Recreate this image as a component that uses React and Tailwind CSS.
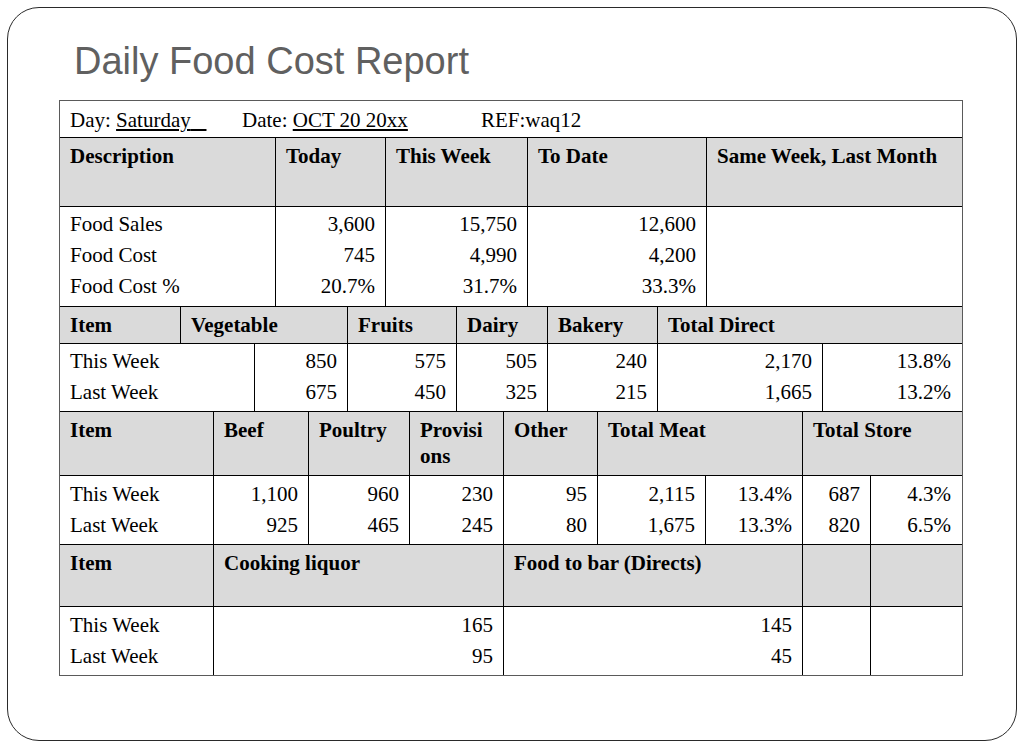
import React from 'react';

const H = 'bg-[#dadada] font-bold leading-[26px] pt-[5px] px-[10px] border-r border-black';
const HL = 'bg-[#dadada] font-bold leading-[26px] pt-[5px] px-[10px]';
const D = 'leading-[31px] pt-[3px] px-[10px] border-r border-black';
const DL = 'leading-[31px] pt-[3px] px-[10px]';

function Lines({ items, right }) {
  return (
    <>
      {items.map((t, i) => (
        <div key={i} className={right ? 'text-right' : ''}>
          {t || '\u00a0'}
        </div>
      ))}
    </>
  );
}

const weeks = ['This Week', 'Last Week'];

export default function App() {
  return (
    <div className="w-[1024px] h-[751px] bg-white p-[7px]">
      <div className="h-[734px] w-[1010px] rounded-[32px] border border-[#2a2a2a] pt-[31px]">
        <h1 className="pl-[66px] text-[38px] leading-[44px] text-[#606060] font-['Liberation_Sans',Arial,sans-serif]">
          Daily Food Cost Report
        </h1>

        <div className="ml-[51px] mt-[17px] w-[904px] border border-[#5a5a5a] text-[21px] text-black font-['Liberation_Serif','Times_New_Roman',serif]">
          {/* day / date / ref */}
          <div className="flex h-[37px] border-b border-black pl-[10px] pt-[6px] leading-[26px]">
            <div className="w-[172px]">
              Day: <span className="underline">Saturday{'\u00a0\u00a0\u00a0'}</span>
            </div>
            <div className="w-[239px]">
              Date: <span className="underline">OCT 20 20xx</span>
            </div>
            <div>REF:waq12</div>
          </div>

          {/* food sales */}
          <div className="grid h-[69px] grid-cols-[216px_110px_142px_179px_1fr] border-b border-black">
            <div className={H}>Description</div>
            <div className={H}>Today</div>
            <div className={H}>This Week</div>
            <div className={H}>To Date</div>
            <div className={HL}>Same Week, Last Month</div>
          </div>
          <div className="grid h-[100px] grid-cols-[216px_110px_142px_179px_1fr] border-b border-black">
            <div className={D + ' !pt-[2px]'}>
              <Lines items={['Food Sales', 'Food Cost', 'Food Cost %']} />
            </div>
            <div className={D + ' !pt-[2px]'}>
              <Lines right items={['3,600', '745', '20.7%']} />
            </div>
            <div className={D + ' !pt-[2px]'}>
              <Lines right items={['15,750', '4,990', '31.7%']} />
            </div>
            <div className={D + ' !pt-[2px]'}>
              <Lines right items={['12,600', '4,200', '33.3%']} />
            </div>
            <div className={DL}></div>
          </div>

          {/* directs */}
          <div className="grid h-[37px] grid-cols-[121px_167px_109px_91px_110px_1fr] border-b border-black">
            <div className={H}>Item</div>
            <div className={H}>Vegetable</div>
            <div className={H}>Fruits</div>
            <div className={H}>Dairy</div>
            <div className={H}>Bakery</div>
            <div className={HL}>Total Direct</div>
          </div>
          <div className="grid h-[68px] grid-cols-[195px_93px_109px_91px_110px_165px_1fr] border-b border-black">
            <div className={D + ' !pt-[2px]'}><Lines items={weeks} /></div>
            <div className={D + ' !pt-[2px]'}><Lines right items={['850', '675']} /></div>
            <div className={D + ' !pt-[2px]'}><Lines right items={['575', '450']} /></div>
            <div className={D + ' !pt-[2px]'}><Lines right items={['505', '325']} /></div>
            <div className={D + ' !pt-[2px]'}><Lines right items={['240', '215']} /></div>
            <div className={D + ' !pt-[2px]'}><Lines right items={['2,170', '1,665']} /></div>
            <div className={DL + ' !pt-[2px] pr-[11px]'}><Lines right items={['13.8%', '13.2%']} /></div>
          </div>

          {/* meats / store */}
          <div className="grid h-[64px] grid-cols-[154px_95px_101px_94px_94px_205px_1fr] border-b border-black">
            <div className={H}>Item</div>
            <div className={H}>Beef</div>
            <div className={H}>Poultry</div>
            <div className={H}>
              Provisi
              <br />
              ons
            </div>
            <div className={H}>Other</div>
            <div className={H}>Total Meat</div>
            <div className={HL}>Total Store</div>
          </div>
          <div className="grid h-[69px] grid-cols-[154px_95px_101px_94px_94px_108px_97px_68px_1fr] border-b border-black">
            <div className={D}><Lines items={weeks} /></div>
            <div className={D}><Lines right items={['1,100', '925']} /></div>
            <div className={D}><Lines right items={['960', '465']} /></div>
            <div className={D}><Lines right items={['230', '245']} /></div>
            <div className={D}><Lines right items={['95', '80']} /></div>
            <div className={D}><Lines right items={['2,115', '1,675']} /></div>
            <div className={D}><Lines right items={['13.4%', '13.3%']} /></div>
            <div className={D}><Lines right items={['687', '820']} /></div>
            <div className={DL + ' pr-[11px]'}><Lines right items={['4.3%', '6.5%']} /></div>
          </div>

          {/* liquor / bar */}
          <div className="grid h-[62px] grid-cols-[154px_290px_299px_68px_1fr] border-b border-black">
            <div className={H}>Item</div>
            <div className={H}>Cooking liquor</div>
            <div className={H}>Food to bar (Directs)</div>
            <div className={H}></div>
            <div className={HL}></div>
          </div>
          <div className="grid h-[68px] grid-cols-[154px_290px_299px_68px_1fr]">
            <div className={D}><Lines items={weeks} /></div>
            <div className={D}><Lines right items={['165', '95']} /></div>
            <div className={D}><Lines right items={['145', '45']} /></div>
            <div className={D}></div>
            <div className={DL}></div>
          </div>
        </div>
      </div>
    </div>
  );
}
